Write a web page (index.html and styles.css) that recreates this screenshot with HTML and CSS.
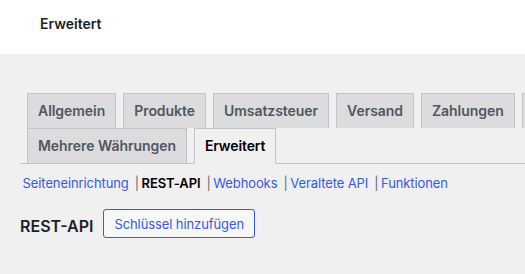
FILE: index.html
```html
<!DOCTYPE html>
<html lang="de">
<head>
<meta charset="utf-8">
<title>Erweitert</title>
<link rel="stylesheet" href="styles.css">
</head>
<body>
<header class="wc-header">
  <h1 class="wc-header__title">Erweitert</h1>
</header>
<main class="wrap">
  <nav class="tabs">
    <a class="tab" href="#">Allgemein</a>
    <a class="tab" href="#">Produkte</a>
    <a class="tab" href="#">Umsatzsteuer</a>
    <a class="tab" href="#">Versand</a>
    <a class="tab" href="#">Zahlungen</a>
    <a class="tab tab--offscreen" href="#" aria-label="Konten &amp; Datenschutz"></a>
    <span class="tab-break"></span>
    <a class="tab" href="#">Mehrere Währungen</a>
    <a class="tab tab--active" href="#">Erweitert</a>
  </nav>
  <ul class="subnav">
    <li class="subnav__item"><a class="subnav__link" href="#">Seiteneinrichtung</a><span class="subnav__sep">|</span></li>
    <li class="subnav__item"><a class="subnav__link subnav__link--current" href="#">REST-API</a><span class="subnav__sep">|</span></li>
    <li class="subnav__item"><a class="subnav__link" href="#">Webhooks</a><span class="subnav__sep">|</span></li>
    <li class="subnav__item"><a class="subnav__link" href="#">Veraltete API</a><span class="subnav__sep">|</span></li>
    <li class="subnav__item"><a class="subnav__link" href="#">Funktionen</a></li>
  </ul>
  <div class="section-head">
    <h2 class="section-head__title">REST-API</h2>
    <a class="btn" href="#">Schlüssel hinzufügen</a>
  </div>
</main>
</body>
</html>
```
FILE: styles.css
```css
html, body {
  margin: 0;
  padding: 0;
}
body {
  background: #f0f0f1;
  font-family: Inter, "Liberation Sans", Arial, sans-serif;
  color: #1d2327;
  overflow: hidden;
  width: 525px;
  height: 274px;
}
.wc-header {
  background: #fff;
  height: 54px;
  padding-left: 40px;
  box-sizing: border-box;
}
.wc-header__title {
  margin: 0;
  font-size: 14px;
  font-weight: 600;
  line-height: 48px;
  color: #1e1e1e;
}
.wrap {
  padding: 39px 0 0 20px;
  width: 1000px;
}
.tabs {
  display: flex;
  flex-wrap: wrap;
  border-bottom: 1px solid #c3c4c7;
}
.tab {
  margin-left: 7px;
  padding: 5px 10px;
  border: 1px solid #c3c4c7;
  border-bottom: none;
  background: #dcdcde;
  color: #50575e;
  font-size: 14px;
  line-height: 24px;
  font-weight: 600;
  letter-spacing: -0.05px;
  text-decoration: none;
  white-space: nowrap;
}
.tab--offscreen {
  width: 140px;
}
.tab--active {
  background: #f0f0f1;
  color: #000;
  border-bottom: 1px solid #f0f0f1;
  margin-bottom: -1px;
  letter-spacing: -0.12px;
}
.tab-break {
  flex-basis: 100%;
  height: 0;
}
.subnav {
  list-style: none;
  margin: 6px 0 0;
  padding: 0;
  display: flex;
  font-size: 13px;
  line-height: 26px;
  color: #646970;
  letter-spacing: -0.1px;
}
.subnav__link {
  color: #3858e9;
  text-decoration: none;
  padding: 0 2px 0 2.6px;
}
.subnav__link--current {
  color: #000;
  font-weight: 600;
}
.subnav__sep {
  margin: 0 0 0 4px;
}
.section-head {
  display: flex;
  align-items: flex-start;
  margin-top: 13px;
}
.section-head__title {
  margin: 3px 10px 0 0;
  font-size: 16px;
  line-height: 29px;
  font-weight: 600;
  color: #1d2327;
}
.btn {
  box-sizing: border-box;
  height: 29px;
  display: flex;
  align-items: center;
  padding: 0 10px;
  border: 1px solid #3858e9;
  border-radius: 3px;
  background: #f6f7f7;
  color: #3858e9;
  font-size: 13px;
  letter-spacing: -0.1px;
  text-decoration: none;
}
```
